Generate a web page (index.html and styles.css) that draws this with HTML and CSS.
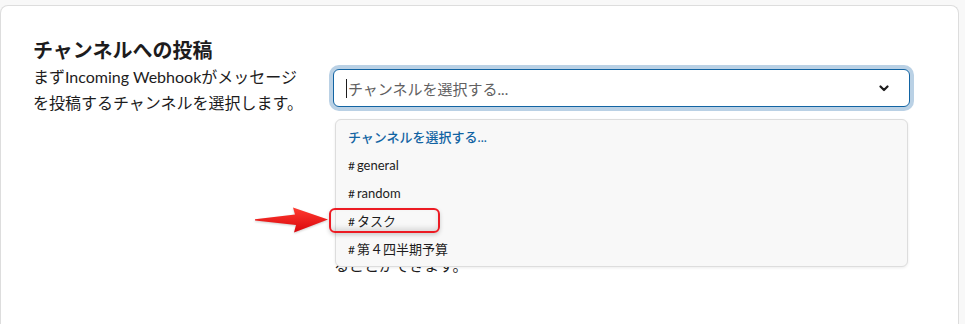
FILE: index.html
```html
<!DOCTYPE html>
<html lang="ja">
<head>
<meta charset="utf-8">
<title>チャンネルへの投稿</title>
<link rel="stylesheet" href="styles.css">
</head>
<body>
<div class="card">
  <h2 class="title">チャンネルへの投稿</h2>
  <div class="row">
    <div class="left">
      <p class="desc">まずIncoming Webhookがメッセージを投稿するチャンネルを選択します。</p>
    </div>
    <div class="field">
      <div class="select">
        <span class="caret"></span>
        <span class="placeholder">チャンネルを選択する...</span>
        <svg class="chevron" width="10" height="7" viewBox="0 0 10 7"><path d="M1.5 1.5 L5 5 L8.5 1.5" fill="none" stroke="#1d1c1d" stroke-width="2.2" stroke-linecap="round" stroke-linejoin="round"/></svg>
      </div>
      <p class="hint">ることができます。</p>
      <ul class="menu">
        <li class="menu-head">チャンネルを選択する...</li>
        <li class="menu-item"><span class="hash">#</span>general</li>
        <li class="menu-item"><span class="hash">#</span>random</li>
        <li class="menu-item"><span class="hash">#</span>タスク</li>
        <li class="menu-item"><span class="hash">#</span>第４四半期予算</li>
      </ul>
      <div class="mark"></div>
      <svg class="arrow" width="78" height="30" viewBox="0 0 78 30">
        <defs>
          <linearGradient id="ag" x1="0" y1="0" x2="0" y2="1">
            <stop offset="0" stop-color="#ff3b30"/>
            <stop offset="1" stop-color="#d9060c"/>
          </linearGradient>
        </defs>
        <path d="M2 14.2 L42 9.5 L40 2.5 L75 14.5 L41 27.5 L43 20 L2 15.6 Z" fill="url(#ag)"/>
      </svg>
    </div>
  </div>
</div>
</body>
</html>
```
FILE: styles.css
```css
* { box-sizing: border-box; }

body {
  margin: 0;
  background: #f8f8f8;
  font-family: "Lato", "Noto Sans CJK JP", sans-serif;
  color: #1d1c1d;
  overflow: hidden;
}

.card {
  margin: 5px 6px 0 0;
  height: 319px;
  background: #fff;
  border: 1px solid #dddddd;
  border-bottom: 0;
  border-radius: 8px 8px 0 0;
  padding: 31px 48px 0 32px;
}

.title {
  margin: 0;
  font-size: 20px;
  line-height: 26px;
  font-weight: 700;
}

.row {
  display: flex;
  margin-top: 1px;
}

.left {
  flex: 0 0 300px;
}

.desc {
  margin: 0;
  width: 272px;
  font-size: 16px;
  line-height: 26px;
}

.field {
  flex: 1;
  position: relative;
  padding-top: 5px;
}

.select {
  height: 38px;
  border: 1px solid #1264a3;
  border-radius: 6px;
  box-shadow: 0 0 0 4px #bad1e5;
  display: flex;
  align-items: center;
  padding: 0 20px 0 12px;
  background: #fff;
}

.caret {
  width: 1px;
  height: 19px;
  background: #1d1c1d;
  margin-right: 1px;
}

.placeholder {
  flex: 1;
  font-size: 15px;
  color: #616061;
}

.chevron { display: block; }

.hint {
  margin: 145px 0 0 1px;
  font-size: 15px;
  line-height: 26px;
}

.menu {
  position: absolute;
  top: 55px;
  left: 2px;
  right: 2px;
  height: 148px;
  margin: 0;
  padding: 3px 0 0;
  list-style: none;
  background: #f8f8f8;
  border: 1px solid #dddddd;
  border-radius: 6px;
  box-shadow: 0 1px 3px rgba(0, 0, 0, 0.08);
  z-index: 2;
}

.menu li {
  height: 28px;
  line-height: 28px;
  padding-left: 12px;
  font-size: 13px;
}

.menu-head {
  color: #1264a3;
  font-weight: 500;
}

.hash {
  margin-right: 2px;
  font-size: 12px;
}

.mark {
  position: absolute;
  left: -4px;
  top: 144px;
  width: 111px;
  height: 25px;
  border: 2px solid #ec1b23;
  border-radius: 6px;
  box-shadow: 0 2px 4px rgba(0, 0, 0, 0.18), inset 0 -3px 5px rgba(0, 0, 0, 0.12);
  z-index: 3;
}

.arrow {
  position: absolute;
  left: -80px;
  top: 141px;
  z-index: 3;
  filter: drop-shadow(0 1px 1px rgba(0, 0, 0, 0.2));
}
```
